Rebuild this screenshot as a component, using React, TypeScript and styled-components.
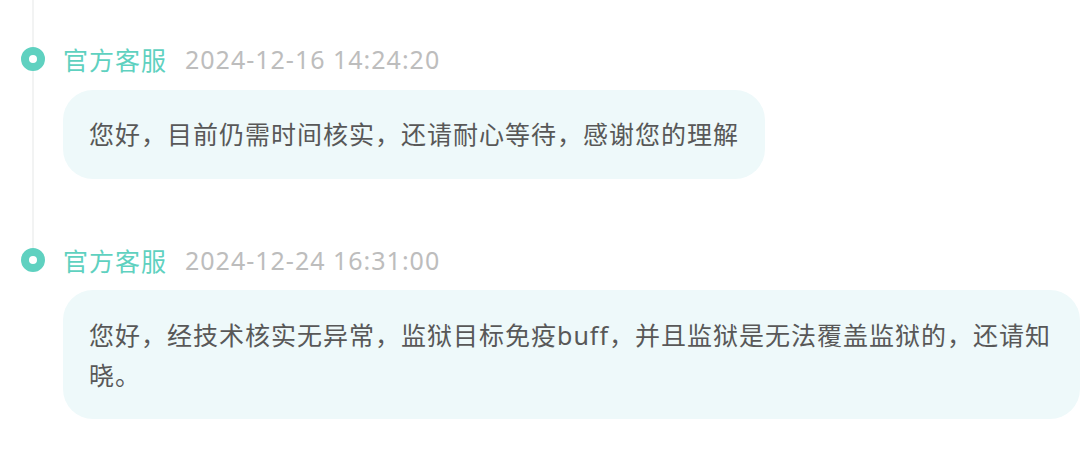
import React from 'react';
import styled, { createGlobalStyle } from 'styled-components';

const GlobalStyle = createGlobalStyle`
  html, body {
    margin: 0;
    padding: 0;
    background: #ffffff;
    overflow: hidden;
  }
  body {
    font-family: "Noto Sans", "Noto Sans CJK SC", sans-serif;
  }
`;

const Timeline = styled.div`
  width: 1080px;
  display: flex;
  flex-direction: column;
`;

const Item = styled.div`
  display: flex;
  flex-direction: row;
`;

const Rail = styled.div`
  width: 40px;
  margin-left: 13px;
  margin-right: 10px;
  display: flex;
  flex-direction: column;
  align-items: center;
  flex-shrink: 0;
`;

const Segment = styled.div<{ $height?: number }>`
  width: 2px;
  background: #f2f3f3;
  ${(p) => (p.$height !== undefined ? `height: ${p.$height}px;` : 'flex: 1;')}
`;

const Dot = styled.div`
  width: 8px;
  height: 8px;
  border: 8px solid #5fd1c0;
  border-radius: 50%;
  background: #ffffff;
  flex-shrink: 0;
`;

const Body = styled.div<{ $first?: boolean; $last?: boolean }>`
  flex: 1;
  min-width: 0;
  padding-top: ${(p) => (p.$first ? 42 : 0)}px;
  padding-bottom: ${(p) => (p.$last ? 0 : 64)}px;
`;

const Header = styled.div`
  display: flex;
  align-items: center;
  height: 34px;
  margin-bottom: 13.5px;
  white-space: nowrap;
`;

const Name = styled.span`
  font-size: 25px;
  letter-spacing: 1px;
  color: #5fd1c0;
  margin-right: 18px;
`;

const Time = styled.span`
  font-size: 25px;
  letter-spacing: 1px;
  color: #bdbdbd;
`;

const Bubble = styled.div`
  display: inline-block;
  max-width: 100%;
  box-sizing: border-box;
  padding: 24.5px 26px;
  background: #eef9fa;
  border-radius: 30px;
  font-size: 25px;
  letter-spacing: 1px;
  line-height: 40px;
  color: #585858;
`;

interface Message {
  name: string;
  time: string;
  text: string;
}

const messages: Message[] = [
  {
    name: '官方客服',
    time: '2024-12-16 14:24:20',
    text: '您好，目前仍需时间核实，还请耐心等待，感谢您的理解',
  },
  {
    name: '官方客服',
    time: '2024-12-24 16:31:00',
    text: '您好，经技术核实无异常，监狱目标免疫buff，并且监狱是无法覆盖监狱的，还请知晓。',
  },
];

const App = () => {
  return (
    <>
      <GlobalStyle />
      <Timeline>
        {messages.map((m, i) => {
          const first = i === 0;
          const last = i === messages.length - 1;
          return (
            <Item key={i}>
              <Rail>
                <Segment $height={first ? 47 : 5} />
                <Dot />
                {!last && <Segment />}
              </Rail>
              <Body $first={first} $last={last}>
                <Header>
                  <Name>{m.name}</Name>
                  <Time>{m.time}</Time>
                </Header>
                <Bubble>{m.text}</Bubble>
              </Body>
            </Item>
          );
        })}
      </Timeline>
    </>
  );
};

export default App;
